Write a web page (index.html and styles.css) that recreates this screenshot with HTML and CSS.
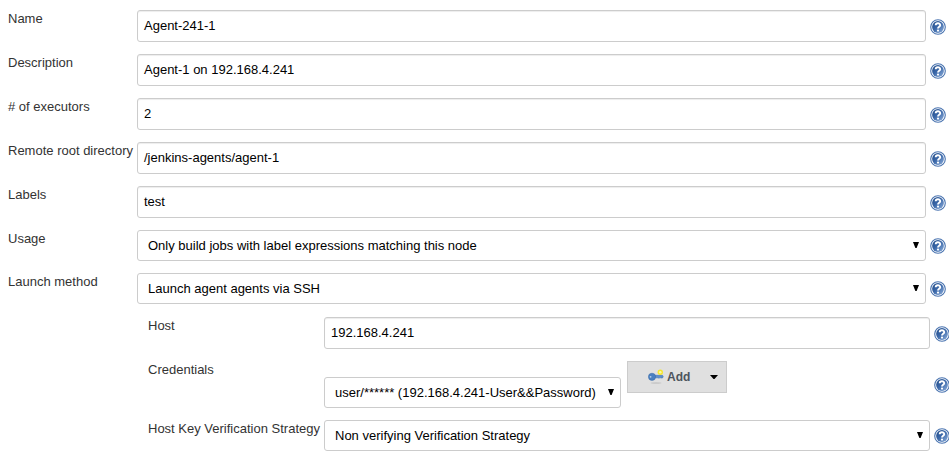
FILE: index.html
```
<!DOCTYPE html>
<html lang="en">
<head>
<meta charset="utf-8">
<title>Agent configuration</title>
<link rel="stylesheet" href="styles.css">
</head>
<body>
<svg class="defs" width="0" height="0" aria-hidden="true">
  <defs>
    <linearGradient id="blue" x1="0" y1="0" x2="1" y2="1">
      <stop offset="0" stop-color="#204a87"/><stop offset=".45" stop-color="#3a67a8"/><stop offset="1" stop-color="#8fb0dc"/>
    </linearGradient>
    <symbol id="help" viewBox="0 0 16 16">
      <circle cx="8" cy="8" r="7.3" fill="#fff" stroke="#4a74b0" stroke-width="1.1"/>
      <circle cx="8" cy="8" r="5.9" fill="url(#blue)"/>
      <path d="M5.7 6.3C5.7 3.6 10.2 3.6 10.2 6.2C10.2 7.8 8 7.8 8 9.5" fill="none" stroke="#fff" stroke-width="1.9"/>
      <circle cx="8" cy="11.6" r="1.1" fill="#fff"/>
    </symbol>
    <symbol id="arrow" viewBox="0 0 6 6"><path d="M0 0H6L3.6 6H2.4Z" fill="#000"/></symbol>
  </defs>
</svg>
<main class="form">
  <div class="row"><label class="label">Name</label><div class="field">Agent-241-1</div><svg class="help"><use href="#help"/></svg></div>
  <div class="row"><label class="label">Description</label><div class="field">Agent-1 on 192.168.4.241</div><svg class="help"><use href="#help"/></svg></div>
  <div class="row"><label class="label"># of executors</label><div class="field">2</div><svg class="help"><use href="#help"/></svg></div>
  <div class="row"><label class="label">Remote root directory</label><div class="field">/jenkins-agents/agent-1</div><svg class="help"><use href="#help"/></svg></div>
  <div class="row"><label class="label">Labels</label><div class="field">test</div><svg class="help"><use href="#help"/></svg></div>
  <div class="row"><label class="label">Usage</label><div class="field select"><span>Only build jobs with label expressions matching this node</span><svg class="arrow"><use href="#arrow"/></svg></div><svg class="help"><use href="#help"/></svg></div>
  <div class="row"><label class="label">Launch method</label><div class="field select"><span>Launch agent agents via SSH</span><svg class="arrow"><use href="#arrow"/></svg></div><svg class="help"><use href="#help"/></svg></div>
  <section class="nested">
    <div class="row"><label class="label">Host</label><div class="field">192.168.4.241</div><svg class="help"><use href="#help"/></svg></div>
    <div class="row credentials"><label class="label">Credentials</label>
      <div class="controls">
        <div class="field select"><span>user/****** (192.168.4.241-User&amp;&amp;Password)</span><svg class="arrow"><use href="#arrow"/></svg></div>
        <button class="add" type="button">
          <svg class="key" viewBox="0 0 16 16">
            <ellipse cx="8" cy="14" rx="5.5" ry=".8" fill="#c4c4c4"/>
            <path d="M5 6.3H14.5L15.2 7.5L14.5 9H13L12 8.6L11 9.2L10 8.8H5Z" fill="#5d8fcc" stroke="#4376b4" stroke-width=".6"/>
            <circle cx="4" cy="7.8" r="3.6" fill="#4a80c1" stroke="#3767a4" stroke-width=".5"/>
            <circle cx="2.6" cy="7.8" r=".9" fill="#b7cde8"/>
            <circle cx="12.3" cy="3.3" r="2.7" fill="#f5e62e"/><circle cx="12.3" cy="3.3" r="1.2" fill="#fff9a0"/>
          </svg>
          <span class="add-text">Add</span>
          <svg class="caret" viewBox="0 0 8 4"><path d="M0 0H8L4.5 4H3.5Z" fill="#000"/></svg>
        </button>
      </div>
      <svg class="help"><use href="#help"/></svg></div>
    <div class="row"><label class="label">Host Key Verification Strategy</label><div class="field select"><span>Non verifying Verification Strategy</span><svg class="arrow"><use href="#arrow"/></svg></div><svg class="help"><use href="#help"/></svg></div>
  </section>
</main>
</body>
</html>
```
FILE: styles.css
```
* { box-sizing: border-box; }
body {
  margin: 0;
  background: #fff;
  color: #333;
  font: 13px/18px "Liberation Sans", Arial, sans-serif;
  overflow: hidden;
}
.defs { display: block; }
.form {
  display: flex;
  flex-direction: column;
  gap: 12px;
  width: 950px;
  padding: 10px 0 0 8px;
}
.row {
  display: grid;
  grid-template-columns: 129px 789px 16px;
  align-items: start;
}
.label { white-space: nowrap; }
.field {
  height: 32px;
  padding: 6px;
  border: 1px solid #ccc;
  border-radius: 3px;
  box-shadow: inset 0 1px 1px rgba(0, 0, 0, .075);
  background: #fff;
  color: #000;
  line-height: 18px;
  white-space: nowrap;
}
.select {
  display: flex;
  justify-content: space-between;
  height: 31px;
  padding: 6px 6px 6px 10px;
  box-shadow: none;
}
.arrow { width: 6px; height: 6px; margin-top: 5px; }
.help { width: 16px; height: 16px; margin: 9px 0 0 4px; }
.select + .help { margin-top: 8px; }
.nested {
  display: flex;
  flex-direction: column;
  gap: 12px;
  margin: 1px 0 0 140px;
}
.nested .row { grid-template-columns: 176px 606px 16px; }
.controls { display: flex; gap: 6px; height: 47px; }
.controls .select { width: 297px; margin-top: 16px; }
.credentials .help { margin-top: 16px; }
.add {
  display: flex;
  align-items: center;
  width: 100px;
  height: 32px;
  padding: 0 8px 0 20px;
  border: 1px solid #ccc;
  background: #e0e0e0;
  color: #4d545d;
  font: bold 12px/18px "Liberation Sans", Arial, sans-serif;
}
.key { flex: none; width: 16px; height: 16px; }
.add-text { margin-left: 3px; }
.caret { flex: none; width: 8px; height: 4px; margin-left: auto; }
```
